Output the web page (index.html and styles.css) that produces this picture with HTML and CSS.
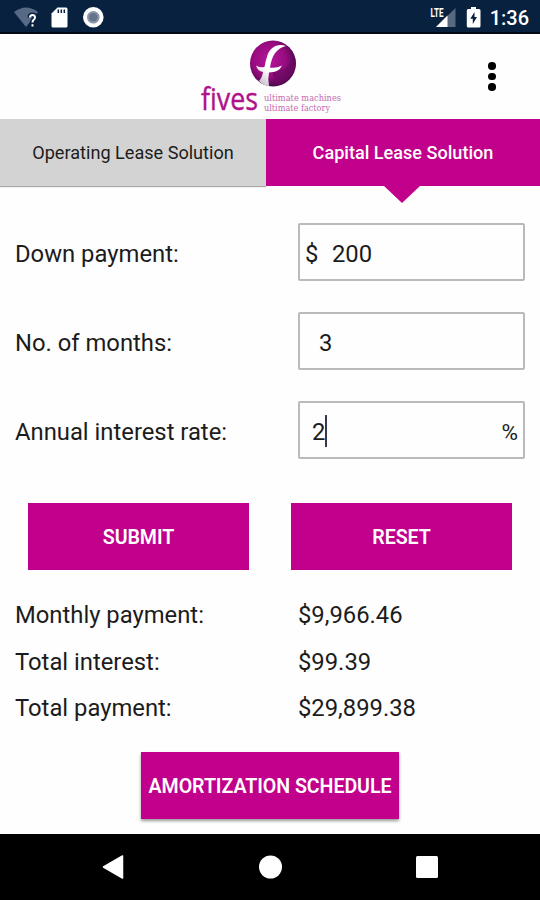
FILE: index.html
```html
<!DOCTYPE html>
<html lang="en">
<head>
    <meta charset="UTF-8">
    <meta name="viewport" content="width=device-width, initial-scale=1.0">
    <title>Capital Lease Solution</title>
    <link rel="stylesheet" href="styles.css">
</head>
<body>
    <!-- Status bar -->
    <div class="status">
        <svg class="status-left" width="110" height="32" viewBox="0 0 110 32">
            <path d="M14 12Q26 3 38 12L26 27Z" fill="#566985"/>
            <path d="M30 17.500Q30 15 32.500 15Q35 15 35 17.500Q35 19 33.500 20Q32.500 20.800 32.500 22.500" fill="none" stroke="#08213f" stroke-width="5"/>
            <path d="M30 17.500Q30 15 32.500 15Q35 15 35 17.500Q35 19 33.500 20Q32.500 20.800 32.500 22.500M32.500 24.300V26.500" fill="none" stroke="#fff" stroke-width="2"/>
            <path d="M57.500 7.500H66Q67.500 7.500 67.500 9V26Q67.500 27.500 66 27.500H53Q51.500 27.500 51.500 26V13.500Z" fill="#fff"/>
            <path d="M58.300 9.500V13M61.300 9.500V13M64.300 9.500V13" stroke="#08213f" stroke-width="1.500"/>
            <circle cx="93.300" cy="17.300" r="8.300" fill="#8c98aa" stroke="#fff" stroke-width="4"/>
            <circle cx="93.300" cy="17.300" r="4.300" fill="#64748b"/>
        </svg>
        <div class="status-right">
            <svg width="56" height="32" viewBox="0 0 56 32">
                <path d="M25.500 8V27H6Z" fill="#56697f"/>
                <path d="M17.500 15.500V27H6Z" fill="#fff"/>
                <text class="lte" x="0.500" y="16.500" textLength="13" lengthAdjust="spacingAndGlyphs">LTE</text>
                <path d="M41 7H46V9H49Q50.500 9 50.500 10.500V26Q50.500 27.500 49 27.500H38.300Q36.800 27.500 36.800 26V10.500Q36.800 9 38.300 9H41Z" fill="#fff"/>
                <path d="M44.500 12L40.300 18.800H42.800V24L47 17H44.500Z" fill="#08213f"/>
            </svg>
            <span class="time">1:36</span>
        </div>
    </div>

    <!-- Header -->
    <header class="header">
        <svg class="logo" width="150" height="84" viewBox="0 0 150 84">
            <defs>
                <radialGradient id="ball" cx="42%" cy="42%" r="60%">
                    <stop offset="0" stop-color="#b8149a"/>
                    <stop offset="0.600" stop-color="#980c80"/>
                    <stop offset="1" stop-color="#45094a"/>
                </radialGradient>
                <linearGradient id="fshade" x1="0" y1="1" x2="0.700" y2="0">
                    <stop offset="0" stop-color="#b9adbd"/>
                    <stop offset="0.450" stop-color="#fff"/>
                    <stop offset="1" stop-color="#fff"/>
                </linearGradient>
            </defs>
            <circle cx="77" cy="29.500" r="23" fill="url(#ball)"/>
            <path d="M76 37Q91 37 99.500 25Q101 35 94 43.500Q88 50 80 51Z" fill="#6d0a62" opacity="0.700"/>
            <path d="M90 12C82 9 74.500 13 71.500 21Q69.500 27 68.500 33Q63 34 60 31.500Q61.500 37 67 38Q66 44 63 47Q67 51.500 73 52Q71.500 45 73 38.500Q83 38.500 86 31.500Q80 34.500 74 33.500Q76.500 15 90 12Z" fill="url(#fshade)"/>
            <text class="logo-name" x="5" y="76" textLength="57" lengthAdjust="spacingAndGlyphs">fives</text>
            <text class="logo-tag" x="68" y="67" textLength="77" lengthAdjust="spacingAndGlyphs">ultimate machines</text>
            <text class="logo-tag" x="68" y="76.500" textLength="66" lengthAdjust="spacingAndGlyphs">ultimate factory</text>
        </svg>
        <div class="menu">
            <span></span>
            <span></span>
            <span></span>
        </div>
    </header>

    <!-- Tabs -->
    <nav class="tabs">
        <div class="tab">Operating Lease Solution</div>
        <div class="tab active">Capital Lease Solution</div>
    </nav>

    <!-- Form -->
    <main class="content">
        <div class="row">
            <label>Down payment:</label>
            <div class="field"><span class="prefix">$</span>200</div>
        </div>
        <div class="row">
            <label>No. of months:</label>
            <div class="field months">3</div>
        </div>
        <div class="row">
            <label>Annual interest rate:</label>
            <div class="field rate">2<span class="caret"></span><span class="suffix">%</span></div>
        </div>

        <div class="buttons">
            <button>SUBMIT</button>
            <button>RESET</button>
        </div>

        <div class="results">
            <span>Monthly payment:</span><span>$9,966.46</span>
            <span>Total interest:</span><span>$99.39</span>
            <span>Total payment:</span><span>$29,899.38</span>
        </div>

        <button class="schedule">AMORTIZATION SCHEDULE</button>
    </main>

    <!-- Navigation bar -->
    <footer class="navbar">
        <svg width="24" height="26" viewBox="0 0 24 26"><path d="M20.500 2V24L1.500 13Z" fill="#fff" stroke="#fff" stroke-width="1.500" stroke-linejoin="round"/></svg>
        <svg width="24" height="24" viewBox="0 0 24 24"><circle cx="11.500" cy="12" r="11.500" fill="#fff"/></svg>
        <svg width="22" height="22" viewBox="0 0 22 22"><rect width="22" height="22" rx="1.500" fill="#fff"/></svg>
    </footer>
</body>
</html>
```
FILE: styles.css
```css
* { margin: 0; padding: 0; box-sizing: border-box; }
body { width: 540px; height: 900px; display: flex; flex-direction: column; overflow: hidden; font-family: Roboto, "Liberation Sans", sans-serif; font-size: 23.8px; color: #1c1c1c; background: #fefefe; }

/* Status bar */
.status { height: 34px; display: flex; justify-content: space-between; background: #08213f; border-bottom: 2px solid #020a18; }
.status-right { display: flex; align-items: center; gap: 4px; padding-right: 11px; }
.lte { font-size: 12px; font-weight: 700; fill: #fff; }
.time { font-size: 20px; font-weight: 500; line-height: 32px; padding-top: 3px; color: #fff; }

/* Header */
.header { height: 85px; display: flex; justify-content: space-between; padding-left: 196px; }
.logo-name { font-family: "Open Sans", sans-serif; font-size: 31px; fill: #b0128c; stroke: #b0128c; stroke-width: 0.4px; }
.logo-tag { font-family: "DejaVu Serif", serif; font-size: 9px; fill: #c56bb2; }
.menu { width: 96px; display: flex; flex-direction: column; align-items: center; gap: 3px; padding-top: 28px; }
.menu span { width: 7.5px; height: 7.5px; border-radius: 50%; background: #000; }

/* Tabs */
.tabs { height: 67px; display: flex; font-size: 18.1px; line-height: 67px; text-align: center; }
.tab { width: 266px; background: #d3d3d3; box-shadow: 0 1px 1px #aaa; }
.tab.active { width: 274px; position: relative; background: #c1008b; color: #fff; font-weight: 500; box-shadow: none; }
.tab.active::after { content: ""; position: absolute; left: 118px; top: 67px; border: 18px solid transparent; border-top: 17px solid #c1008b; border-bottom: 0; }

/* Form */
.content { flex: 1; display: flex; flex-direction: column; padding: 37px 15px 0; }
.row { height: 58px; margin-bottom: 31px; display: flex; align-items: center; justify-content: space-between; }
.row label { padding-top: 3px; }
.field { width: 227px; height: 58px; display: flex; align-items: center; padding: 3px 5px 0; border: 2px solid #bababa; border-radius: 2px; }
.prefix { width: 27px; }
.months { padding-left: 19px; }
.rate { padding-left: 12px; }
.caret { width: 2px; height: 32px; margin-bottom: 2px; background: #34384f; }
.suffix { margin-left: auto; font-size: 22.5px; }

/* Buttons */
button { height: 67px; padding-top: 2px; font-family: inherit; font-size: 19.6px; font-weight: 600; letter-spacing: -0.05px; color: #fff; background: #c1008b; border: none; }
.buttons { display: flex; justify-content: space-between; padding: 13px 13px 0; }
.buttons button { width: 221px; }
.results { display: grid; grid-template-columns: 283px 1fr; grid-auto-rows: 46.5px; line-height: 47px; margin-top: 22px; }
.schedule { width: 258px; margin: 20px 0 0 126px; box-shadow: 0 2px 3px rgba(0, 0, 0, 0.4); }

/* Navigation bar */
.navbar { height: 66px; display: flex; align-items: center; justify-content: space-between; padding: 0 102px; background: #000; }
```
